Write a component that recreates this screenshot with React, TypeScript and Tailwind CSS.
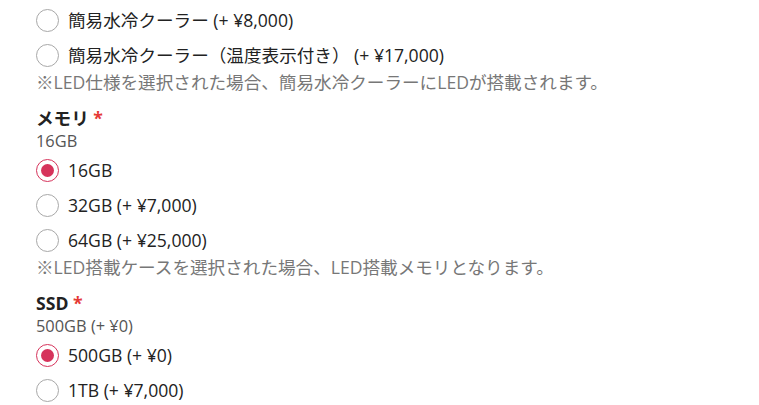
import { useState } from "react";

type Option = { value: string; label: string };

function Radio({ checked, label, onClick }: { checked: boolean; label: string; onClick: () => void }) {
  return (
    <label onClick={onClick} className="flex h-[35px] cursor-pointer items-center gap-[9px]">
      <span
        className={`flex h-[23px] w-[23px] shrink-0 items-center justify-center rounded-full border ${
          checked ? "border-[#d6335b]" : "border-[#a8a8a8]"
        } bg-white`}
      >
        {checked && <span className="h-[13px] w-[13px] rounded-full bg-[#d6335b]" />}
      </span>
      <span className="text-[17.6px] text-[#222]">{label}</span>
    </label>
  );
}

function Group({
  options,
  value,
  onChange,
}: {
  options: Option[];
  value: string;
  onChange: (v: string) => void;
}) {
  return (
    <div className="flex flex-col">
      {options.map((o) => (
        <Radio key={o.value} checked={value === o.value} label={o.label} onClick={() => onChange(o.value)} />
      ))}
    </div>
  );
}

export default function App() {
  const [cooler, setCooler] = useState("");
  const [memory, setMemory] = useState("16");
  const [ssd, setSsd] = useState("500");

  return (
    <div
      className="h-[405px] w-[759px] overflow-hidden bg-white pl-[36px] pt-[3px] text-[#222]"
      style={{ fontFamily: '"Open Sans", "Noto Sans CJK JP", sans-serif' }}
    >
      {/* Cooler */}
      <Group
        value={cooler}
        onChange={setCooler}
        options={[
          { value: "simple", label: "簡易水冷クーラー (+ ¥8,000)" },
          { value: "temp", label: "簡易水冷クーラー（温度表示付き） (+ ¥17,000)" },
        ]}
      />
      <p className="text-[17.6px] leading-[18px] text-[#777]">
        ※LED仕様を選択された場合、簡易水冷クーラーにLEDが搭載されます。
      </p>

      {/* Memory */}
      <div className="mt-[15px]">
        <div className="text-[17.6px] font-bold leading-[24px]">
          メモリ <span className="text-[#e53935]">*</span>
        </div>
        <div className="text-[16.4px] leading-[22px] text-[#555]">16GB</div>
        <div className="mt-[1px]">
          <Group
            value={memory}
            onChange={setMemory}
            options={[
              { value: "16", label: "16GB" },
              { value: "32", label: "32GB (+ ¥7,000)" },
              { value: "64", label: "64GB (+ ¥25,000)" },
            ]}
          />
        </div>
        <p className="text-[17.6px] leading-[18px] text-[#777]">
          ※LED搭載ケースを選択された場合、LED搭載メモリとなります。
        </p>
      </div>

      {/* SSD */}
      <div className="mt-[15px]">
        <div className="text-[17.6px] font-bold leading-[24px]">
          SSD <span className="text-[#e53935]">*</span>
        </div>
        <div className="text-[16.4px] leading-[22px] text-[#555]">500GB (+ ¥0)</div>
        <div className="mt-[1px]">
          <Group
            value={ssd}
            onChange={setSsd}
            options={[
              { value: "500", label: "500GB (+ ¥0)" },
              { value: "1t", label: "1TB (+ ¥7,000)" },
            ]}
          />
        </div>
      </div>
    </div>
  );
}
